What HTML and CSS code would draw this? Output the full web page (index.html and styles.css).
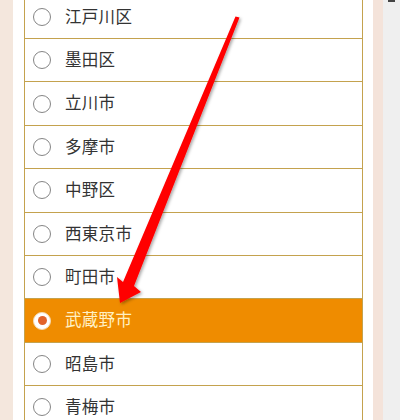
FILE: index.html
```html
<!DOCTYPE html>
<html lang="ja">
<head>
<meta charset="utf-8">
<link rel="stylesheet" href="styles.css">
</head>
<body>
<div class="page">
  <div class="edge-left"></div>
  <div class="panel">
    <ul class="options">
      <li class="opt"><span class="radio"></span><span class="label">江戸川区</span></li>
      <li class="opt"><span class="radio"></span><span class="label">墨田区</span></li>
      <li class="opt"><span class="radio"></span><span class="label">立川市</span></li>
      <li class="opt"><span class="radio"></span><span class="label">多摩市</span></li>
      <li class="opt"><span class="radio"></span><span class="label">中野区</span></li>
      <li class="opt"><span class="radio"></span><span class="label">西東京市</span></li>
      <li class="opt"><span class="radio"></span><span class="label">町田市</span></li>
      <li class="opt selected"><span class="radio"></span><span class="label">武蔵野市</span></li>
      <li class="opt"><span class="radio"></span><span class="label">昭島市</span></li>
      <li class="opt"><span class="radio"></span><span class="label">青梅市</span></li>
    </ul>
  </div>
  <div class="edge-right"></div>
  <div class="gutter"><span class="mark"></span></div>
</div>
<svg class="arrow" width="400" height="420" viewBox="0 0 400 420">
  <defs>
    <filter id="sh" x="-20%" y="-20%" width="140%" height="140%">
      <feDropShadow dx="1.5" dy="1.5" stdDeviation="1.6" flood-color="#000" flood-opacity="0.35"/>
    </filter>
  </defs>
  <polygon filter="url(#sh)" fill="#ff0000" points="235.5,16.5 239.5,17.5 134,286 141,292 120,303 117,277 123,282"/>
</svg>
</body>
</html>
```
FILE: styles.css
```css
html, body {
  margin: 0;
  padding: 0;
  background: #efefef;
}
body {
  width: 400px;
  height: 420px;
  overflow: hidden;
  position: relative;
  font-family: "Noto Sans CJK JP", "Noto Sans", sans-serif;
}
.page {
  display: flex;
  height: 420px;
}
.edge-left {
  width: 13px;
  background: #f4e7dd;
  flex: none;
}
.panel {
  width: 360px;
  flex: none;
  background: #ffffff;
  padding: 0 10px 0 11px;
  box-sizing: border-box;
  overflow: hidden;
}
.options {
  list-style: none;
  margin: -4.4px 0 0 0;
  padding: 0;
  border-left: 1px solid #c4a24e;
  border-right: 1px solid #c4a24e;
}
.opt {
  height: 42.4px;
  border-bottom: 1px solid #c4a24e;
  display: flex;
  align-items: center;
  padding-left: 8px;
  background: #ffffff;
}
.radio {
  width: 16px;
  height: 16px;
  border: 1px solid #858585;
  border-radius: 50%;
  background: #fff;
  flex: none;
  box-sizing: content-box;
  position: relative;
}
.label {
  margin-left: 14px;
  font-size: 16.5px;
  color: #333333;
  letter-spacing: 0.3px;
  line-height: 1;
  margin-top: -2px;
}
.opt.selected {
  background: #ef8c00;
}
.opt.selected .radio {
  border-color: #f6d9b0;
  background: #fff;
}
.opt.selected .radio::after {
  content: "";
  position: absolute;
  left: 3.5px;
  top: 3.5px;
  width: 9px;
  height: 9px;
  border-radius: 50%;
  background: #e2632a;
}
.opt.selected .label {
  color: #fff1c4;
}
.edge-right {
  width: 10px;
  background: #f4e3da;
  flex: none;
}
.gutter {
  flex: 1;
  background: #efefef;
  position: relative;
}
.mark {
  display: block;
  width: 7px;
  height: 2px;
  margin-left: 5px;
  background: #444;
}
.arrow {
  position: absolute;
  left: 0;
  top: 0;
  pointer-events: none;
}
```
